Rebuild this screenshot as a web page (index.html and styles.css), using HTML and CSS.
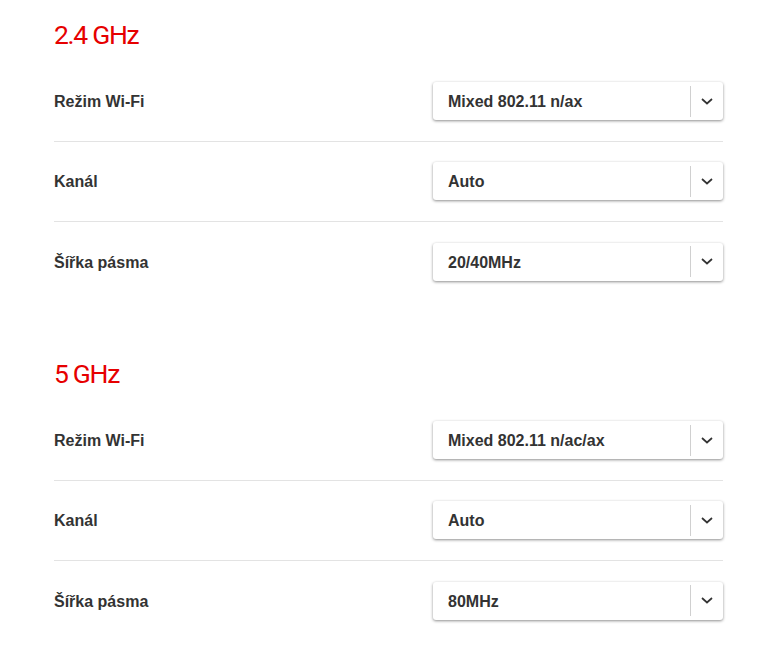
FILE: index.html
```html
<!DOCTYPE html>
<html lang="cs">
<head>
<meta charset="utf-8">
<title>Wi-Fi</title>
<link rel="stylesheet" href="styles.css">
</head>
<body>
<div class="page">
  <section class="band">
    <h2 class="band-title">2.4 GHz</h2>
    <div class="row">
      <span class="label">Režim Wi-Fi</span>
      <div class="select"><span class="value">Mixed 802.11 n/ax</span><span class="arrow"><svg width="12" height="7" viewBox="0 0 12 7"><path d="M1 1l5 4.5L11 1" fill="none" stroke="#333" stroke-width="1.7"/></svg></span></div>
    </div>
    <div class="row">
      <span class="label">Kanál</span>
      <div class="select"><span class="value">Auto</span><span class="arrow"><svg width="12" height="7" viewBox="0 0 12 7"><path d="M1 1l5 4.5L11 1" fill="none" stroke="#333" stroke-width="1.7"/></svg></span></div>
    </div>
    <div class="row">
      <span class="label">Šířka pásma</span>
      <div class="select"><span class="value">20/40MHz</span><span class="arrow"><svg width="12" height="7" viewBox="0 0 12 7"><path d="M1 1l5 4.5L11 1" fill="none" stroke="#333" stroke-width="1.7"/></svg></span></div>
    </div>
  </section>
  <section class="band band-second">
    <h2 class="band-title">5 GHz</h2>
    <div class="row">
      <span class="label">Režim Wi-Fi</span>
      <div class="select"><span class="value">Mixed 802.11 n/ac/ax</span><span class="arrow"><svg width="12" height="7" viewBox="0 0 12 7"><path d="M1 1l5 4.5L11 1" fill="none" stroke="#333" stroke-width="1.7"/></svg></span></div>
    </div>
    <div class="row">
      <span class="label">Kanál</span>
      <div class="select"><span class="value">Auto</span><span class="arrow"><svg width="12" height="7" viewBox="0 0 12 7"><path d="M1 1l5 4.5L11 1" fill="none" stroke="#333" stroke-width="1.7"/></svg></span></div>
    </div>
    <div class="row">
      <span class="label">Šířka pásma</span>
      <div class="select"><span class="value">80MHz</span><span class="arrow"><svg width="12" height="7" viewBox="0 0 12 7"><path d="M1 1l5 4.5L11 1" fill="none" stroke="#333" stroke-width="1.7"/></svg></span></div>
    </div>
  </section>
</div>
</body>
</html>
```
FILE: styles.css
```css
html, body {
  margin: 0;
  padding: 0;
  background: #fff;
}
body {
  font-family: "Liberation Sans", Arial, sans-serif;
  color: #333;
}
.page {
  width: 669px;
  padding-left: 54px;
}
.band {
  padding-top: 17px;
}
.band-second {
  margin-top: 37px;
}
.band-title {
  margin: 0 0 9px 0;
  font-family: Roboto, "Liberation Sans", sans-serif;
  font-weight: 400;
  font-size: 26.5px;
  line-height: 36px;
  letter-spacing: -1.3px;
  color: #e60000;
}
.row {
  display: flex;
  align-items: center;
  justify-content: space-between;
  height: 80px;
  box-sizing: border-box;
  padding: 20px 0 21px 0;
  border-bottom: 1px solid #e3e3e3;
}
.row:last-child {
  border-bottom: none;
}
.label {
  font-weight: 700;
  font-size: 16px;
  padding-top: 2px;
}
.select {
  display: flex;
  align-items: center;
  width: 290px;
  height: 38px;
  box-sizing: border-box;
  background: #fff;
  border-radius: 3px;
  box-shadow: 0 1px 3px rgba(0, 0, 0, 0.45);
}
.value {
  flex: 1;
  padding-left: 15px;
  padding-top: 2px;
  font-weight: 700;
  font-size: 16px;
}
.arrow {
  display: flex;
  align-items: center;
  justify-content: center;
  width: 32px;
  height: 31px;
  border-left: 1px solid #d0d0d0;
}
.arrow svg {
  display: block;
}
```
